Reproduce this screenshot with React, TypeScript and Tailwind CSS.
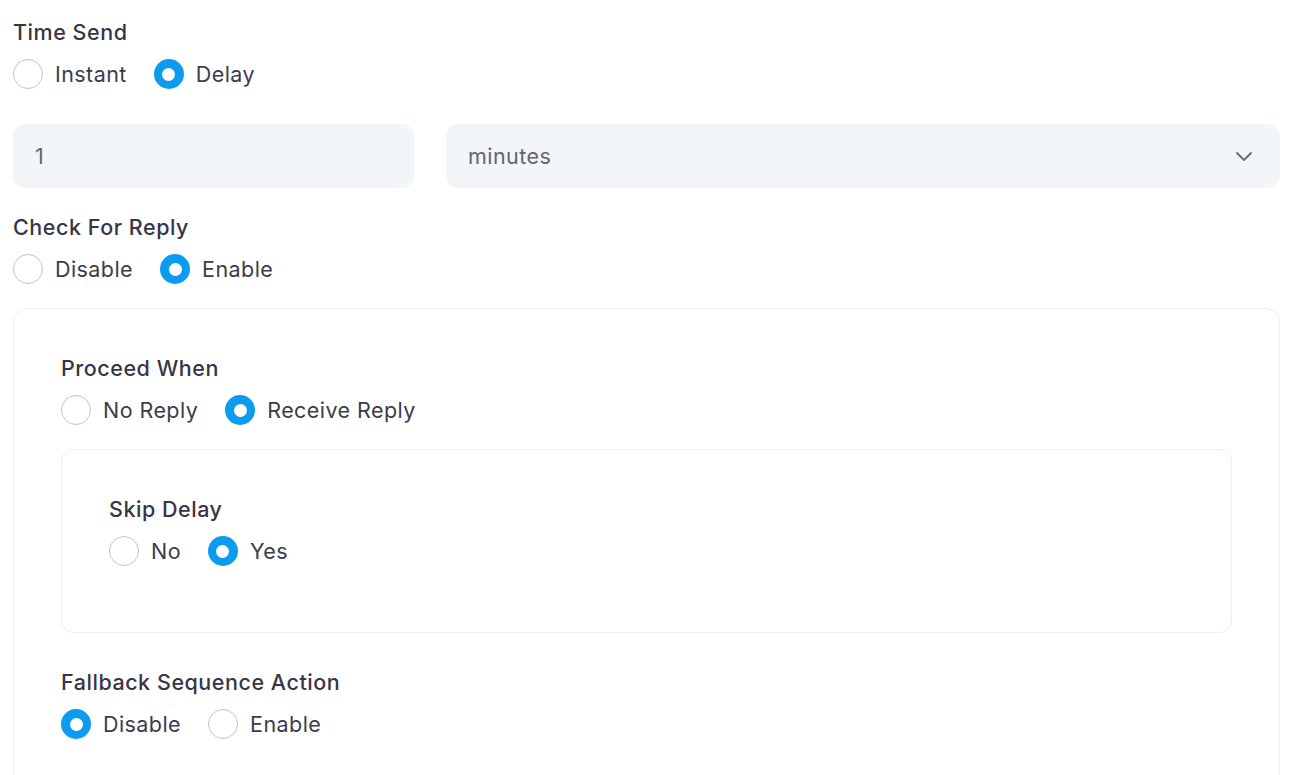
import { useState } from "react";

type Opt = { value: string; label: string };

function RadioGroup({
  options,
  value,
  onChange,
}: {
  options: Opt[];
  value: string;
  onChange: (v: string) => void;
}) {
  return (
    <div className="flex items-center gap-[27px] mt-[13px]">
      {options.map((o) => {
        const checked = o.value === value;
        return (
          <label
            key={o.value}
            className="flex items-center gap-[12px] cursor-pointer"
            onClick={() => onChange(o.value)}
          >
            {checked ? (
              <span className="w-[30px] h-[30px] rounded-full bg-[#0b9cf0] flex items-center justify-center">
                <span className="w-[13px] h-[13px] rounded-full bg-white" />
              </span>
            ) : (
              <span className="w-[30px] h-[30px] rounded-full border border-[#c4c4c8] bg-white" />
            )}
            <span className="text-[21.5px] leading-[28px] tracking-[0.02em] text-[#3c3c4c]">
              {o.label}
            </span>
          </label>
        );
      })}
    </div>
  );
}

function FieldLabel({ children }: { children: React.ReactNode }) {
  return (
    <div className="text-[21.5px] leading-[28px] tracking-[0.025em] font-medium text-[#363646]">
      {children}
    </div>
  );
}

export default function App() {
  const [timeSend, setTimeSend] = useState("delay");
  const [checkReply, setCheckReply] = useState("enable");
  const [proceed, setProceed] = useState("receive");
  const [skip, setSkip] = useState("yes");
  const [fallback, setFallback] = useState("disable");

  return (
    <div
      className="min-h-screen bg-white pl-[13px] pr-[15px] pt-[18px] overflow-hidden h-[775px]"
      style={{ fontFamily: "Inter, 'Open Sans', sans-serif" }}
    >
      <FieldLabel>Time Send</FieldLabel>
      <RadioGroup
        value={timeSend}
        onChange={setTimeSend}
        options={[
          { value: "instant", label: "Instant" },
          { value: "delay", label: "Delay" },
        ]}
      />

      <div className="grid grid-cols-[401px_1fr] gap-[32px] mt-[35px]">
        <div className="h-[64px] rounded-[12px] bg-[#f3f6f9] flex items-center px-[22px] text-[21.5px] tracking-[0.02em] text-[#626475]">
          1
        </div>
        <div className="h-[64px] rounded-[12px] bg-[#f3f6f9] flex items-center justify-between pl-[22px] pr-[24px] text-[21.5px] tracking-[0.02em] text-[#626475]">
          <span>minutes</span>
          <svg
            width="24"
            height="24"
            viewBox="0 0 24 24"
            fill="none"
            stroke="#6b6f7b"
            strokeWidth="2"
            strokeLinecap="round"
            strokeLinejoin="round"
          >
            <path d="M5 9l7 7 7-7" />
          </svg>
        </div>
      </div>

      <div className="mt-[25px]">
        <FieldLabel>Check For Reply</FieldLabel>
      </div>
      <RadioGroup
        value={checkReply}
        onChange={setCheckReply}
        options={[
          { value: "disable", label: "Disable" },
          { value: "enable", label: "Enable" },
        ]}
      />

      <div className="mt-[24px] border border-[#eceef2] rounded-[14px] px-[47px] pt-[45px] pb-[60px]">
        <FieldLabel>Proceed When</FieldLabel>
        <RadioGroup
          value={proceed}
          onChange={setProceed}
          options={[
            { value: "no", label: "No Reply" },
            { value: "receive", label: "Receive Reply" },
          ]}
        />

        <div className="mt-[24px] border border-[#eceef2] rounded-[12px] px-[47px] pt-[45px] pb-[66px]">
          <FieldLabel>Skip Delay</FieldLabel>
          <RadioGroup
            value={skip}
            onChange={setSkip}
            options={[
              { value: "no", label: "No" },
              { value: "yes", label: "Yes" },
            ]}
          />
        </div>

        <div className="mt-[35px]">
          <FieldLabel>Fallback Sequence Action</FieldLabel>
        </div>
        <RadioGroup
          value={fallback}
          onChange={setFallback}
          options={[
            { value: "disable", label: "Disable" },
            { value: "enable", label: "Enable" },
          ]}
        />
      </div>
    </div>
  );
}
